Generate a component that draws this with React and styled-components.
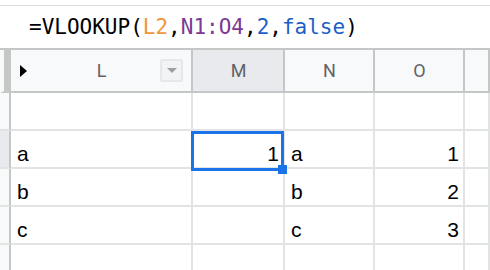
import styled, { createGlobalStyle } from "styled-components";

const GlobalStyle = createGlobalStyle`
  html, body {
    margin: 0;
    padding: 0;
    background: #ffffff;
  }
  body {
    font-family: "Liberation Sans", Arial, sans-serif;
    width: 490px;
    height: 270px;
    overflow: hidden;
  }
`;

const COLS = "11px 182px 92px 90px 90px 1fr";

const Page = styled.div`
  display: flex;
  flex-direction: column;
  width: 490px;
`;

const TopStrip = styled.div`
  height: 5px;
  border-bottom: 1px solid #dadce0;
  background: #ffffff;
`;

const FormulaBar = styled.div`
  height: 42px;
  display: flex;
  align-items: center;
  padding-left: 29px;
  font-family: "DejaVu Sans Mono", "Liberation Mono", monospace;
  font-size: 21px;
  color: #000000;
  white-space: pre;
`;

const Token = styled.span`
  color: ${(p) => p.$color || "#000000"};
`;

const Grid = styled.div`
  position: relative;
  border-top: 2px solid #c4c7c5;
`;

const Row = styled.div`
  display: grid;
  grid-template-columns: ${COLS};
  height: ${(p) => (p.$head ? "43px" : "38px")};
`;

const HeadGutter = styled.div`
  box-sizing: border-box;
  border-left: 4px solid #f8f9fa;
  background-color: #c4c7c5;
  border-bottom: 2px solid #c4c7c5;
`;

const HeadCell = styled.div`
  box-sizing: border-box;
  display: grid;
  grid-template-columns: 1fr auto 1fr;
  align-items: center;
  background: ${(p) => (p.$active ? "#e8eaed" : "#f8f9fa")};
  border-right: 2px solid #c4c7c5;
  border-bottom: 2px solid #c4c7c5;
  font-family: Roboto, "Liberation Sans", sans-serif;
  font-size: 18px;
  color: #5f6368;
  padding: 0 8px 0 9px;
`;

const Label = styled.span`
  grid-column: 2;
  padding-bottom: 1px;
`;

const Expand = styled.span`
  grid-column: 1;
  justify-self: start;
  width: 0;
  height: 0;
  border-left: 7px solid #000000;
  border-top: 6px solid transparent;
  border-bottom: 6px solid transparent;
  margin-top: 1px;
`;

const FilterButton = styled.span`
  grid-column: 3;
  justify-self: end;
  box-sizing: border-box;
  width: 23px;
  height: 23px;
  background: #f1f3f4;
  border: 2px solid #e6e7e8;
  border-radius: 2px;
  display: flex;
  align-items: center;
  justify-content: center;

  &::after {
    content: "";
    width: 0;
    height: 0;
    border-top: 5px solid #9aa0a6;
    border-left: 5px solid transparent;
    border-right: 5px solid transparent;
  }
`;

const RowGutter = styled.div`
  box-sizing: border-box;
  background: ${(p) => (p.$active ? "#e8eaed" : "#f8f9fa")};
  border-right: 2px solid #c4c7c5;
  border-bottom: 2px solid #e2e3e3;
`;

const Cell = styled.div`
  box-sizing: border-box;
  display: flex;
  align-items: flex-end;
  justify-content: ${(p) => (p.$num ? "flex-end" : "flex-start")};
  padding: 0 4px 3px 6px;
  border-right: 2px solid #e2e3e3;
  border-bottom: 2px solid #e2e3e3;
  font-size: 21px;
  line-height: 21px;
  color: #000000;
`;

const Selection = styled.div`
  position: absolute;
  left: 191px;
  top: 81px;
  width: 93px;
  height: 40px;
  box-sizing: border-box;
  border: 3px solid #1a73e8;
  pointer-events: none;
`;

const Handle = styled.div`
  position: absolute;
  left: 278px;
  top: 115px;
  width: 9px;
  height: 9px;
  background: #1a73e8;
`;

const columns = [
  { id: "L" },
  { id: "M", active: true },
  { id: "N" },
  { id: "O" },
  { id: "P", blank: true },
];

const rows = [
  { id: 1, cells: ["", "", "", ""] },
  { id: 2, active: true, cells: ["a", "1", "a", "1"] },
  { id: 3, cells: ["b", "", "b", "2"] },
  { id: 4, cells: ["c", "", "c", "3"] },
  { id: 5, cells: ["", "", "", ""] },
];

const formula = [
  { t: "=VLOOKUP(" },
  { t: "L2", c: "#f0963a" },
  { t: "," },
  { t: "N1:O4", c: "#7b3a94" },
  { t: "," },
  { t: "2", c: "#1d5fc9" },
  { t: "," },
  { t: "false", c: "#1d5fc9" },
  { t: ")" },
];

export default function App() {
  return (
    <Page>
      <GlobalStyle />
      <TopStrip />
      <FormulaBar>
        {formula.map((f, i) => (
          <Token key={i} $color={f.c}>
            {f.t}
          </Token>
        ))}
      </FormulaBar>

      <Grid>
        <Row $head>
          <HeadGutter />
          {columns.map((col) =>
            col.id === "L" ? (
              <HeadCell key={col.id}>
                <Expand />
                <Label>{col.id}</Label>
                <FilterButton />
              </HeadCell>
            ) : (
              <HeadCell key={col.id} $active={col.active}>
                <Label>{col.blank ? "" : col.id}</Label>
              </HeadCell>
            )
          )}
        </Row>

        {rows.map((row) => (
          <Row key={row.id}>
            <RowGutter $active={row.active} />
            {row.cells.map((v, i) => (
              <Cell key={i} $num={/^\d+$/.test(v)}>
                {v}
              </Cell>
            ))}
            <Cell />
          </Row>
        ))}

        <Selection />
        <Handle />
      </Grid>
    </Page>
  );
}
